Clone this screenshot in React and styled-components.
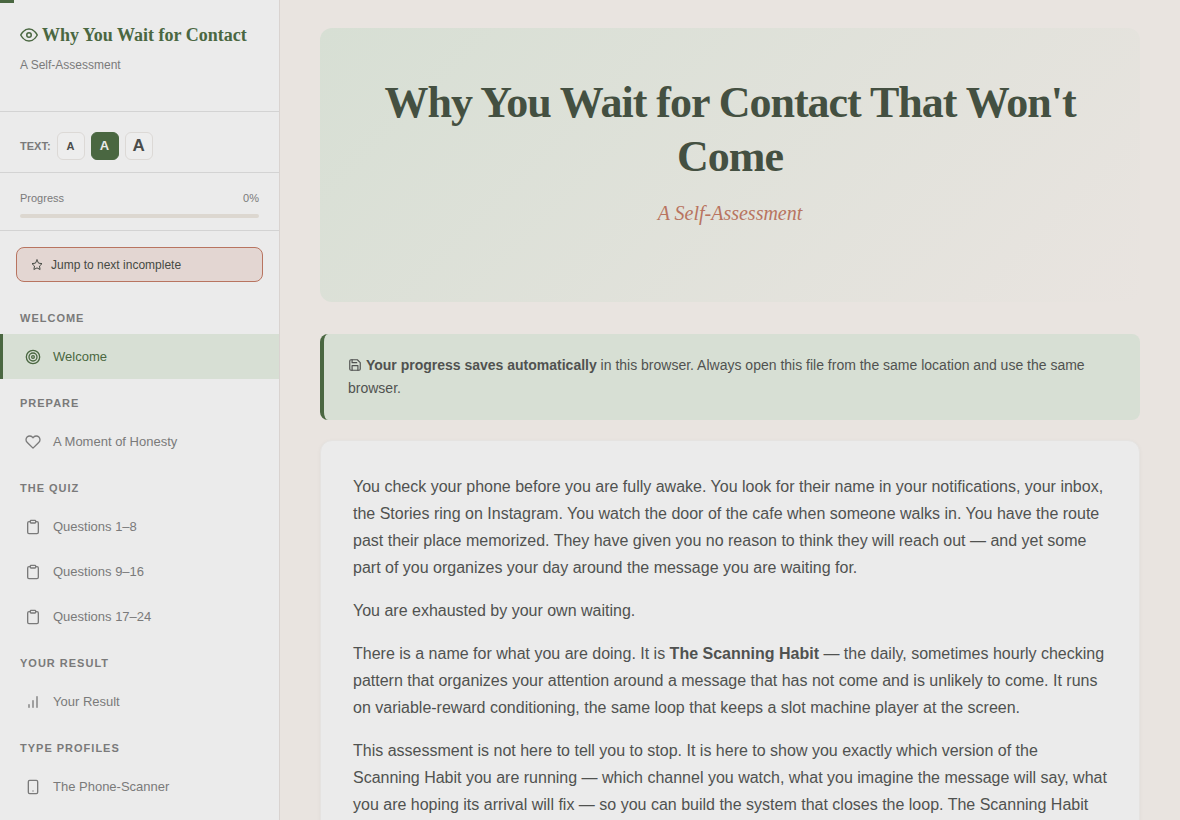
import React from "react";
import styled, { createGlobalStyle, css } from "styled-components";

const sans = '"Liberation Sans", Arial, Helvetica, sans-serif';
const serif = '"Liberation Serif", "Times New Roman", serif';

const GlobalStyle = createGlobalStyle`
  *, *::before, *::after { box-sizing: border-box; }
  html, body { margin: 0; height: 100%; }
  #root { height: 100%; }
  body {
    background: #e9e4e0;
    color: #505250;
    font-family: ${sans};
    font-size: 16px;
    line-height: 27px;
  }
`;

const Svg = styled.svg`
  width: ${(p) => p.$size}px;
  height: ${(p) => p.$size}px;
  flex: none;
  fill: none;
  stroke: currentColor;
  stroke-width: 2;
  stroke-linecap: round;
  stroke-linejoin: round;
`;

const glyphs = {
  eye: (
    <>
      <path d="M1 12s4-8 11-8 11 8 11 8-4 8-11 8-11-8-11-8z" />
      <circle cx="12" cy="12" r="3" />
    </>
  ),
  star: (
    <path d="M12 2l3.09 6.26L22 9.27l-5 4.87 1.18 6.88L12 17.77l-6.18 3.25L7 14.14 2 9.27l6.91-1.01L12 2z" />
  ),
  target: (
    <>
      <circle cx="12" cy="12" r="10" />
      <circle cx="12" cy="12" r="6" />
      <circle cx="12" cy="12" r="2" />
    </>
  ),
  heart: (
    <path d="M20.84 4.61a5.5 5.5 0 0 0-7.78 0L12 5.67l-1.06-1.06a5.5 5.5 0 0 0-7.78 7.78l1.06 1.06L12 21.23l7.78-7.78 1.06-1.06a5.5 5.5 0 0 0 0-7.78z" />
  ),
  clipboard: (
    <>
      <path d="M16 4h2a2 2 0 0 1 2 2v14a2 2 0 0 1-2 2H6a2 2 0 0 1-2-2V6a2 2 0 0 1 2-2h2" />
      <rect x="8" y="2" width="8" height="4" rx="1" />
    </>
  ),
  bars: (
    <>
      <line x1="12" y1="20" x2="12" y2="10" />
      <line x1="18" y1="20" x2="18" y2="4" />
      <line x1="6" y1="20" x2="6" y2="16" />
    </>
  ),
  phone: (
    <>
      <rect x="5" y="2" width="14" height="20" rx="2" />
      <line x1="12" y1="18" x2="12.01" y2="18" />
    </>
  ),
  save: (
    <>
      <path d="M19 21H5a2 2 0 0 1-2-2V5a2 2 0 0 1 2-2h11l5 5v11a2 2 0 0 1-2 2z" />
      <polyline points="17 21 17 13 7 13 7 21" />
      <polyline points="7 3 7 8 15 8" />
    </>
  ),
};

const Icon = ({ name, size = 16 }) => (
  <Svg $size={size} viewBox="0 0 24 24" aria-hidden="true">
    {glyphs[name]}
  </Svg>
);

const ReadingBar = styled.div`
  position: fixed;
  top: 0;
  left: 0;
  width: 14px;
  height: 3px;
  background: #4a6741;
  z-index: 2;
`;

const Shell = styled.div`
  display: grid;
  grid-template-columns: 280px minmax(0, 1fr);
  height: 100%;
`;

const scrollColumn = css`
  min-height: 0;
  overflow-y: auto;
  scrollbar-width: none;
`;

const Sidebar = styled.aside`
  ${scrollColumn}
  background: #ebebeb;
  border-right: 1px solid #d9d3d0;
`;

const Block = styled.div`
  border-bottom: 1px solid #d3d3d3;
`;

const Brand = styled(Block)`
  padding: 20px 20px 34px;
`;

const BrandTitle = styled.div`
  display: flex;
  align-items: center;
  gap: 4px;
  height: 30px;
  color: #4a6741;
  font: bold 18px/30px ${serif};
  white-space: nowrap;
`;

const BrandSub = styled.div`
  margin-top: 4px;
  color: #7a7a7a;
  font-size: 12px;
  line-height: 23px;
`;

const TextSize = styled(Block)`
  display: flex;
  align-items: center;
  gap: 6px;
  padding: 20px 20px 12px;
`;

const TextSizeLabel = styled.span`
  color: #7a7a7a;
  font-size: 11px;
  font-weight: bold;
  line-height: 16px;
`;

const SizeButton = styled.button`
  width: 28px;
  height: 28px;
  padding: 0;
  border: 1px solid ${(p) => (p.$active ? "#4a6741" : "#dcd9d6")};
  border-radius: 6px;
  background: ${(p) => (p.$active ? "#4a6741" : "#ededed")};
  color: ${(p) => (p.$active ? "#ebebeb" : "#4a4c4a")};
  font: bold ${(p) => p.$size}px/20px ${sans};
`;

const Progress = styled(Block)`
  padding: 16px 20px 12px;
`;

const ProgressRow = styled.div`
  display: flex;
  justify-content: space-between;
  margin-bottom: 6px;
  color: #7a7a7a;
  font-size: 11px;
  line-height: 19px;
`;

const Track = styled.div`
  height: 4px;
  border-radius: 2px;
  background: #dcd7d0;
`;

const JumpButton = styled.button`
  display: flex;
  align-items: center;
  gap: 8px;
  width: calc(100% - 32px);
  height: 35px;
  margin: 16px 16px 12px;
  padding: 0 14px;
  border: 1px solid #b87460;
  border-radius: 8px;
  background: #e3d6d2;
  color: #464a44;
  font: 12px/20px ${sans};
`;

const SectionLabel = styled.h2`
  margin: 0;
  padding: 16px 20px 8px;
  color: #7a7a7a;
  font-size: 11px;
  font-weight: bold;
  line-height: 16px;
  letter-spacing: 1px;
  text-transform: uppercase;
`;

const NavItem = styled.a`
  display: flex;
  align-items: center;
  gap: 12px;
  height: 45px;
  padding: 0 20px 0 22px;
  border-left: 3px solid transparent;
  color: #7a7a7a;
  font-size: 13px;
  line-height: 22px;
  text-decoration: none;
  ${(p) =>
    p.$active &&
    css`
      border-left-color: #4a6741;
      background: #d7dfd4;
      color: #4a6741;
    `}
`;

const Main = styled.main`
  ${scrollColumn}
  padding: 28px 40px;
`;

const Hero = styled.header`
  padding: 48px 40px 72px;
  border-radius: 12px;
  background: linear-gradient(135deg, #d7dfd4 0%, #e9e4e0 100%);
  text-align: center;
`;

const HeroTitle = styled.h1`
  margin: 0 0 12px;
  color: #445041;
  font: bold 44px/54px ${serif};
  letter-spacing: -1px;
`;

const HeroSub = styled.p`
  margin: 0;
  color: #b87460;
  font: italic 20px/34px ${serif};
`;

const Notice = styled.div`
  margin: 32px 0 20px;
  padding: 20px 24px;
  border-left: 4px solid #4a6741;
  border-radius: 8px;
  background: #d7dfd4;
  font-size: 14px;
  line-height: 23px;

  svg {
    vertical-align: -2px;
  }
`;

const Card = styled.article`
  padding: 32px;
  border: 1px solid #e5e3e1;
  border-radius: 12px;
  background: #ebebeb;
  box-shadow: 0 1px 4px rgba(60, 50, 40, 0.04);
`;

const Paragraph = styled.p`
  margin: 0 0 16px;
`;

const sizes = [
  { label: "Small text", size: 11 },
  { label: "Medium text", size: 13, active: true },
  { label: "Large text", size: 17 },
];

const sections = [
  { title: "Welcome", items: [{ icon: "target", text: "Welcome", active: true }] },
  { title: "Prepare", items: [{ icon: "heart", text: "A Moment of Honesty" }] },
  {
    title: "The Quiz",
    items: [
      { icon: "clipboard", text: "Questions 1–8" },
      { icon: "clipboard", text: "Questions 9–16" },
      { icon: "clipboard", text: "Questions 17–24" },
    ],
  },
  { title: "Your Result", items: [{ icon: "bars", text: "Your Result" }] },
  { title: "Type Profiles", items: [{ icon: "phone", text: "The Phone-Scanner" }] },
];

export default function App() {
  return (
    <>
      <GlobalStyle />
      <ReadingBar />
      <Shell>
        <Sidebar>
          <Brand>
            <BrandTitle>
              <Icon name="eye" size={18} />
              Why You Wait for Contact
            </BrandTitle>
            <BrandSub>A Self-Assessment</BrandSub>
          </Brand>
          <TextSize>
            <TextSizeLabel>TEXT:</TextSizeLabel>
            {sizes.map((s) => (
              <SizeButton key={s.label} type="button" aria-label={s.label} $size={s.size} $active={s.active}>
                A
              </SizeButton>
            ))}
          </TextSize>
          <Progress>
            <ProgressRow>
              <span>Progress</span>
              <span>0%</span>
            </ProgressRow>
            <Track />
          </Progress>
          <JumpButton type="button">
            <Icon name="star" size={12} />
            Jump to next incomplete
          </JumpButton>
          <nav>
            {sections.map((section) => (
              <section key={section.title}>
                <SectionLabel>{section.title}</SectionLabel>
                {section.items.map((item) => (
                  <NavItem key={item.text} href="#" $active={item.active}>
                    <Icon name={item.icon} />
                    {item.text}
                  </NavItem>
                ))}
              </section>
            ))}
          </nav>
        </Sidebar>
        <Main>
          <Hero>
            <HeroTitle>Why You Wait for Contact That Won't Come</HeroTitle>
            <HeroSub>A Self-Assessment</HeroSub>
          </Hero>
          <Notice>
            <Icon name="save" size={14} /> <strong>Your progress saves automatically</strong> in this browser. Always
            open this file from the same location and use the same browser.
          </Notice>
          <Card>
            <Paragraph>
              You check your phone before you are fully awake. You look for their name in your notifications, your
              inbox, the Stories ring on Instagram. You watch the door of the cafe when someone walks in. You have the
              route past their place memorized. They have given you no reason to think they will reach out — and yet
              some part of you organizes your day around the message you are waiting for.
            </Paragraph>
            <Paragraph>You are exhausted by your own waiting.</Paragraph>
            <Paragraph>
              There is a name for what you are doing. It is <strong>The Scanning Habit</strong> — the daily, sometimes
              hourly checking pattern that organizes your attention around a message that has not come and is unlikely
              to come. It runs on variable-reward conditioning, the same loop that keeps a slot machine player at the
              screen.
            </Paragraph>
            <Paragraph>
              This assessment is not here to tell you to stop. It is here to show you exactly which version of the
              Scanning Habit you are running — which channel you watch, what you imagine the message will say, what you
              are hoping its arrival will fix — so you can build the system that closes the loop. The Scanning Habit
            </Paragraph>
          </Card>
        </Main>
      </Shell>
    </>
  );
}
